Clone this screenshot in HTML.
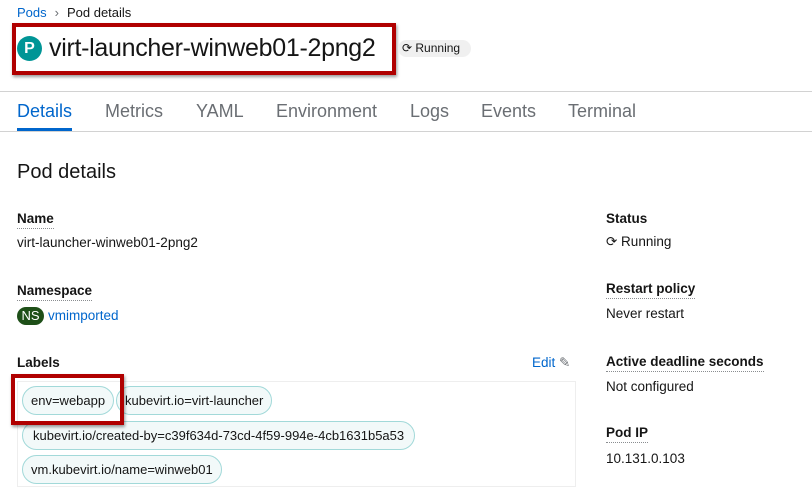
<!DOCTYPE html>
<html><head><meta charset="utf-8"><style>
*{margin:0;padding:0;box-sizing:border-box}
body{width:812px;height:497px;overflow:hidden;background:#fff;font-family:"Liberation Sans",sans-serif;color:#151515;position:relative}
.a{position:absolute;white-space:nowrap}
.lbl{font-weight:bold;font-size:13.5px;border-bottom:1px dotted #8a8d90;padding-bottom:2px}
.val{font-size:13.5px}
.chip{position:absolute;height:29px;border:1px solid #a2d9d9;background:#f2f9f9;border-radius:15px;font-size:13px;line-height:27px;padding:0 8px;color:#151515;white-space:nowrap}
.tab{position:absolute;top:101px;font-size:18px;color:#6a6e73}
</style></head><body>
<div class="a" style="left:17px;top:5px;font-size:13px"><span style="color:#0066cc">Pods</span><span style="color:#6a6e73;margin:0 8px">›</span>Pod details</div>
<div class="a" style="left:12px;top:23px;width:384px;height:52px;border:4px solid #b00000;box-shadow:1px 2px 3px rgba(0,0,0,.4)"></div>
<div class="a" style="left:17px;top:36px;width:25px;height:25px;border-radius:50%;background:#009596;color:#fff;font-size:16px;font-weight:bold;text-align:center;line-height:25px">P</div>
<div class="a" style="left:49px;top:31px;font-size:25px;line-height:34px;letter-spacing:-0.3px">virt-launcher-winweb01-2png2</div>
<div class="a" style="left:398px;top:40px;width:73px;height:17px;background:#f0f0f0;border-radius:9px;font-size:12px;line-height:17px;padding-left:4px">⟳ Running</div>
<div class="a" style="left:0;top:91px;width:812px;height:1px;background:#d2d2d2"></div>
<div class="tab" style="left:17px;color:#0066cc">Details</div>
<div class="tab" style="left:105px">Metrics</div>
<div class="tab" style="left:196px">YAML</div>
<div class="tab" style="left:276px">Environment</div>
<div class="tab" style="left:410px">Logs</div>
<div class="tab" style="left:481px">Events</div>
<div class="tab" style="left:568px">Terminal</div>
<div class="a" style="left:0;top:131px;width:812px;height:1px;background:#d2d2d2"></div>
<div class="a" style="left:17px;top:128px;width:55px;height:3px;background:#0066cc"></div>
<div class="a" style="left:17px;top:161px;font-size:20px">Pod details</div>
<div class="a lbl" style="left:17px;top:211px">Name</div>
<div class="a val" style="left:17px;top:235px">virt-launcher-winweb01-2png2</div>
<div class="a lbl" style="left:17px;top:283px">Namespace</div>
<div class="a" style="left:17px;top:307px;width:27px;height:18px;border-radius:9px;background:#1e4f18;color:#fff;font-size:13px;line-height:18px;text-align:center">NS</div>
<div class="a val" style="left:48px;top:308px;color:#0066cc">vmimported</div>
<div class="a" style="left:17px;top:355px;font-weight:bold;font-size:13.5px">Labels</div>
<div class="a val" style="left:532px;top:355px;color:#0066cc">Edit <span style="color:#6a6e73">✎</span></div>
<div class="a" style="left:17px;top:381px;width:559px;height:106px;border:1px solid #eee"></div>
<div class="chip" style="left:22px;top:386px">env=webapp</div>
<div class="chip" style="left:116px;top:386px">kubevirt.io=virt-launcher</div>
<div class="chip" style="left:22px;top:421px;padding:0 10px">kubevirt.io/created-by=c39f634d-73cd-4f59-994e-4cb1631b5a53</div>
<div class="chip" style="left:22px;top:455px">vm.kubevirt.io/name=winweb01</div>
<div class="a" style="left:11px;top:374px;width:113px;height:51px;border:4px solid #b00000;box-shadow:1px 2px 3px rgba(0,0,0,.4)"></div>
<div class="a" style="left:606px;top:211px;font-weight:bold;font-size:13.5px">Status</div>
<div class="a val" style="left:606px;top:234px">⟳ Running</div>
<div class="a lbl" style="left:606px;top:281px">Restart policy</div>
<div class="a val" style="left:606px;top:306px">Never restart</div>
<div class="a lbl" style="left:606px;top:354px">Active deadline seconds</div>
<div class="a val" style="left:606px;top:379px">Not configured</div>
<div class="a lbl" style="left:606px;top:425px">Pod IP</div>
<div class="a val" style="left:606px;top:451px">10.131.0.103</div>
</body></html>
